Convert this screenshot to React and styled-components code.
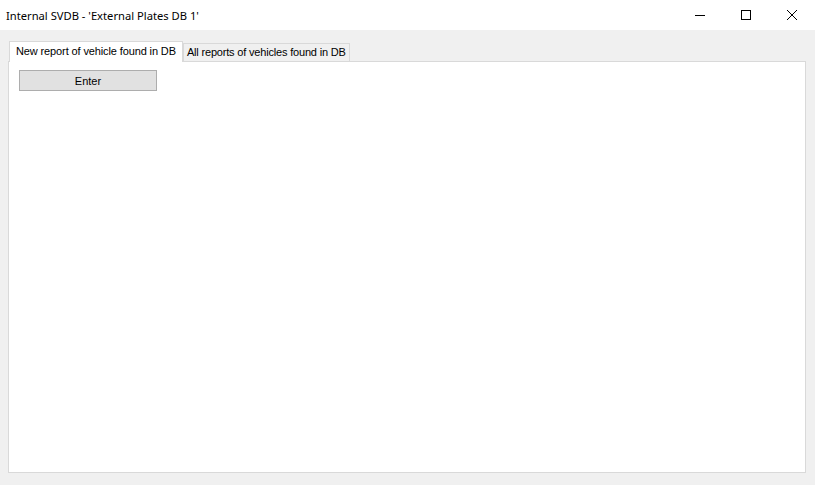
import React, { useState } from 'react'
import styled, { createGlobalStyle } from 'styled-components'

const GlobalStyle = createGlobalStyle`
    html, body {
        margin: 0;
        padding: 0;
        background: #f0f0f0;
    }
`

const Window = styled.div`
    width: 815px;
    height: 485px;
    display: flex;
    flex-direction: column;
    background: #f0f0f0;
    overflow: hidden;
`

const TitleBar = styled.div`
    height: 30px;
    display: flex;
    align-items: center;
    background: #fff;
    padding-left: 6px;
`

const Title = styled.div`
    flex: 1;
    font-family: 'Noto Sans', 'Open Sans', sans-serif;
    font-size: 11.2px;
    color: #000;
`

const Controls = styled.div`
    display: flex;
    height: 100%;
`

const CtrlButton = styled.div`
    width: 46px;
    height: 100%;
    display: flex;
    align-items: center;
    justify-content: center;
`

const Body = styled.div`
    flex: 1;
    padding: 11px 9px 12px 8px;
    display: flex;
    flex-direction: column;
`

const TabStrip = styled.div`
    display: flex;
    align-items: flex-end;
    height: 20px;
    padding-left: 1px;
    position: relative;
    z-index: 1;
`

const Tab = styled.div`
    font-family: 'Liberation Sans', Arial, sans-serif;
    font-size: 11px;
    letter-spacing: ${p => (p.$active ? '-0.12px' : '-0.18px')};
    color: #000;
    box-sizing: border-box;
    border: 1px solid #d9d9d9;
    border-bottom: none;
    background: ${p => (p.$active ? '#fff' : '#f0f0f0')};
    height: ${p => (p.$active ? '21px' : '18px')};
    margin-bottom: ${p => (p.$active ? '-1px' : '0')};
    padding: ${p => (p.$active ? '3px 6px 0 6px' : '2px 3px 0 3px')};
    white-space: nowrap;
    cursor: default;
`

const Panel = styled.div`
    flex: 1;
    background: #fff;
    border: 1px solid #d9d9d9;
    padding: 8px 10px;
`

const Button = styled.button`
    display: block;
    width: 138px;
    height: 21px;
    box-sizing: border-box;
    background: #e1e1e1;
    border: 1px solid #adadad;
    font-family: 'Liberation Sans', Arial, sans-serif;
    font-size: 11px;
    color: #000;
    padding: 0;
`

const tabs = [
    'New report of vehicle found in DB',
    'All reports of vehicles found in DB',
]

export default function App() {
    const [active, setActive] = useState(0)

    return (
        <>
            <GlobalStyle />
            <Window>
                <TitleBar>
                    <Title>Internal SVDB - 'External Plates DB 1'</Title>
                    <Controls>
                        <CtrlButton>
                            <svg width="10" height="10" viewBox="0 0 10 10">
                                <path d="M0 5.5h10" stroke="#000" strokeWidth="1" />
                            </svg>
                        </CtrlButton>
                        <CtrlButton>
                            <svg width="10" height="10" viewBox="0 0 10 10">
                                <rect x="0.5" y="0.5" width="9" height="9" fill="none" stroke="#000" strokeWidth="1" />
                            </svg>
                        </CtrlButton>
                        <CtrlButton>
                            <svg width="10" height="10" viewBox="0 0 10 10">
                                <path d="M0 0L10 10M10 0L0 10" stroke="#000" strokeWidth="1" />
                            </svg>
                        </CtrlButton>
                    </Controls>
                </TitleBar>
                <Body>
                    <TabStrip>
                        {tabs.map((t, i) => (
                            <Tab key={t} $active={i === active} onClick={() => setActive(i)}>
                                {t}
                            </Tab>
                        ))}
                    </TabStrip>
                    <Panel>
                        {active === 0 && <Button>Enter</Button>}
                    </Panel>
                </Body>
            </Window>
        </>
    )
}
